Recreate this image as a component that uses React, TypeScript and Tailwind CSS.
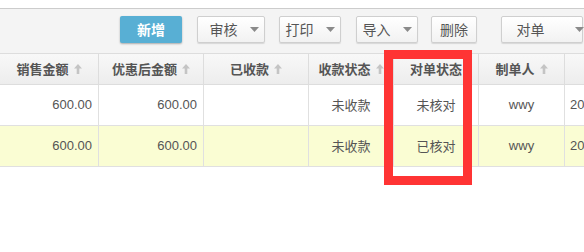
import React from 'react';

const cn = "font-['Noto_Sans_CJK_SC',sans-serif]";

function SortArrow() {
  return (
    <svg width="8" height="10" viewBox="0 0 8 10" className="ml-[5px] inline-block">
      <path d="M4 0 L8 4.5 L5.3 4.5 L5.3 10 L2.7 10 L2.7 4.5 L0 4.5 Z" fill="#c4c4c4" />
    </svg>
  );
}

function Caret() {
  return (
    <svg width="9" height="5" viewBox="0 0 9 5" className="inline-block shrink-0">
      <path d="M0 0 L9 0 L4.5 5 Z" fill="#8a8a8a" />
    </svg>
  );
}

const cols = [
  { w: 'w-[99px]', head: '销售金额', sort: true },
  { w: 'w-[105px]', head: '优惠后金额', sort: true },
  { w: 'w-[105px]', head: '已收款', sort: true },
  { w: 'w-[85px]', head: '收款状态', sort: true },
  { w: 'w-[85px]', head: '对单状态', sort: false },
  { w: 'w-[86px]', head: '制单人', sort: true },
];

const rows = [
  { amt: '600.00', disc: '600.00', pay: '未收款', check: '未核对', user: 'wwy', bg: 'bg-white' },
  { amt: '600.00', disc: '600.00', pay: '未收款', check: '已核对', user: 'wwy', bg: 'bg-[#fafdd3]' },
];

function GrayBtn({ label, caret, className }: { label: string; caret?: boolean; className: string }) {
  return (
    <div
      className={`h-[27px] shrink-0 whitespace-nowrap flex items-center justify-center gap-[12px] rounded-[2px] border border-[#cfcfcf] bg-gradient-to-b from-white to-[#f2f2f2] shadow-[0_1px_1px_rgba(0,0,0,0.12)] text-[14px] text-[#555] ${cn} ${className}`}
    >
      <span>{label}</span>
      {caret && <Caret />}
    </div>
  );
}

export default function App() {
  return (
    <div className="relative w-[584px] h-[252px] overflow-hidden bg-white">
      <div className="h-[8px] bg-white" />
      {/* Toolbar */}
      <div className="h-[46px] border-t border-b border-t-[#cccccc] border-b-[#dddddd] bg-[#f4f4f4] pt-[7px] flex items-start overflow-hidden">
        <div className={`ml-[120px] h-[27px] w-[62px] shrink-0 flex items-center justify-center rounded-[2px] bg-[#58afd4] shadow-[0_1px_2px_rgba(0,0,0,0.3)] text-white text-[14px] font-bold ${cn}`}>
          新增
        </div>
        <GrayBtn label="审核" caret className="ml-[15px] w-[68px] pl-[6px]" />
        <GrayBtn label="打印" caret className="ml-[14px] w-[62px]" />
        <GrayBtn label="导入" caret className="ml-[15px] w-[62px] gap-[6px]" />
        <GrayBtn label="删除" className="ml-[13px] w-[46px]" />
        <GrayBtn label="对单" caret className="ml-[24px] w-[82px] gap-[30px] pl-[16px]" />
      </div>
      {/* Table */}
      <div className="flex h-[31px] border-b border-[#dddddd] bg-gradient-to-b from-[#f8f8f8] to-[#ededed]">
        {cols.map((c) => (
          <div
            key={c.head}
            className={`${c.w} shrink-0 border-r border-[#dddddd] flex items-center justify-center text-[13px] font-bold text-[#555] ${cn}`}
          >
            <span>{c.head}</span>
            {c.sort && <SortArrow />}
          </div>
        ))}
        <div className="flex-1" />
      </div>
      {rows.map((r, i) => (
        <div key={i} className={`flex h-[41px] border-b border-[#e0e0e0] ${r.bg} text-[13px] text-[#555]`}>
          <div className="w-[99px] shrink-0 border-r border-[#e0e0e0] flex items-center justify-end pr-[6px] font-['Liberation_Sans',sans-serif]">
            {r.amt}
          </div>
          <div className="w-[105px] shrink-0 border-r border-[#e0e0e0] flex items-center justify-end pr-[6px] font-['Liberation_Sans',sans-serif]">
            {r.disc}
          </div>
          <div className="w-[105px] shrink-0 border-r border-[#e0e0e0]" />
          <div className={`w-[85px] shrink-0 border-r border-[#e0e0e0] flex items-center justify-center ${cn}`}>{r.pay}</div>
          <div className={`w-[85px] shrink-0 border-r border-[#e0e0e0] flex items-center justify-center ${cn}`}>{r.check}</div>
          <div className="w-[86px] shrink-0 border-r border-[#e0e0e0] flex items-center justify-center font-['Liberation_Sans',sans-serif]">
            {r.user}
          </div>
          <div className="flex-1 flex items-center pl-[5px] font-['Liberation_Sans',sans-serif]">20</div>
        </div>
      ))}
      {/* Highlight box */}
      <div className="absolute left-[384px] top-[50px] w-[88px] h-[135px] border-[9px] border-[#ff3434]" />
    </div>
  );
}
